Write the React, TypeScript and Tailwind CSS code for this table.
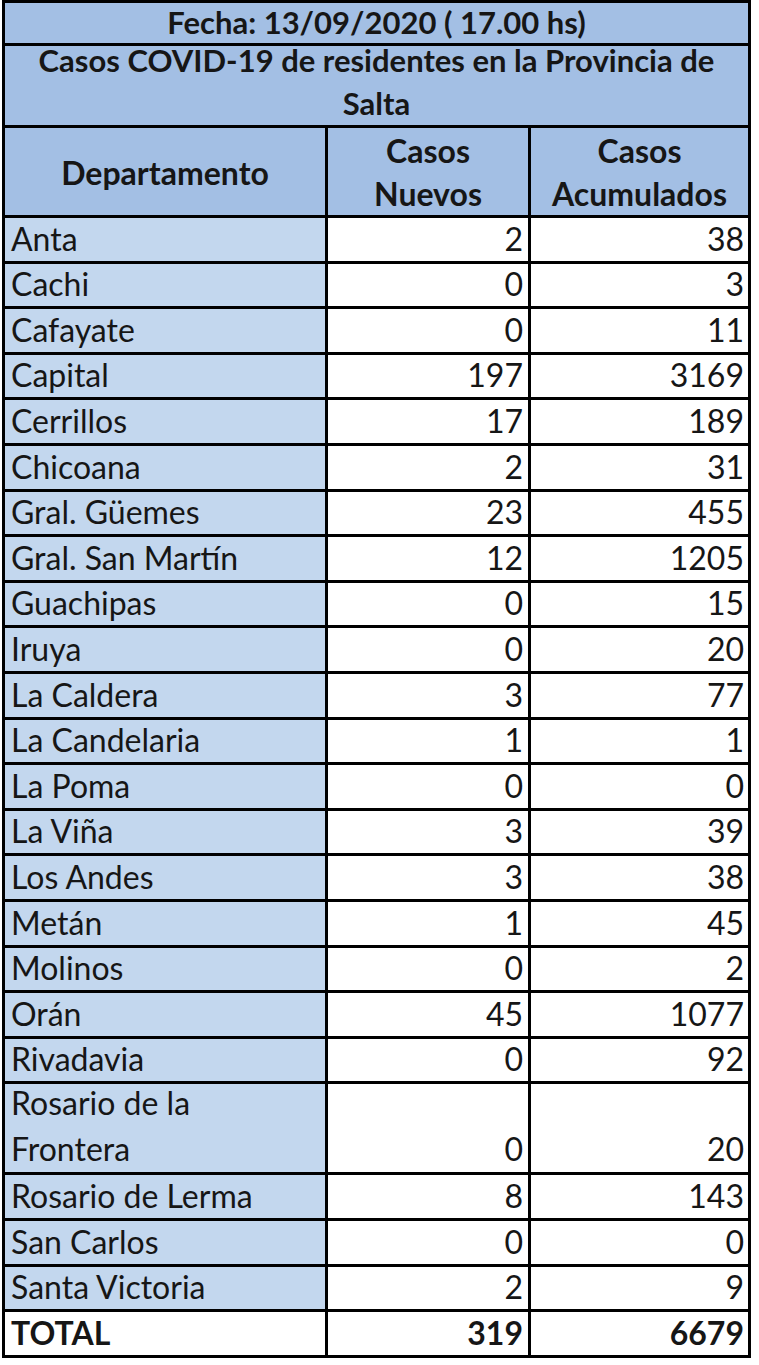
const rows: [string, number, number][] = [
  ["Anta", 2, 38],
  ["Cachi", 0, 3],
  ["Cafayate", 0, 11],
  ["Capital", 197, 3169],
  ["Cerrillos", 17, 189],
  ["Chicoana", 2, 31],
  ["Gral. Güemes", 23, 455],
  ["Gral. San Martín", 12, 1205],
  ["Guachipas", 0, 15],
  ["Iruya", 0, 20],
  ["La Caldera", 3, 77],
  ["La Candelaria", 1, 1],
  ["La Poma", 0, 0],
  ["La Viña", 3, 39],
  ["Los Andes", 3, 38],
  ["Metán", 1, 45],
  ["Molinos", 0, 2],
  ["Orán", 45, 1077],
  ["Rivadavia", 0, 92],
];

const rowsAfter: [string, number, number][] = [
  ["Rosario de Lerma", 8, 143],
  ["San Carlos", 0, 0],
  ["Santa Victoria", 2, 9],
];

function DataRow({ name, nuevos, acum }: { name: string; nuevos: number; acum: number }) {
  return (
    <>
      <div className="flex h-[42.6px] items-end bg-[#c3d7ee] pb-[1px] pl-[6px] leading-[42px]">{name}</div>
      <div className="flex h-[42.6px] items-end justify-end bg-white pb-[1px] pr-[5px] leading-[42px]">{nuevos}</div>
      <div className="flex h-[42.6px] items-end justify-end bg-white pb-[1px] pr-[4px] leading-[42px]">{acum}</div>
    </>
  );
}

export default function App() {
  return (
    <div className="min-h-screen bg-white pl-[2px] font-['Lato',sans-serif] text-[32px] text-[#161616]">
      <div className="grid w-[749px] grid-cols-[320px_200px_217px] gap-[3px] border-[3px] border-black bg-black">
        {/* encabezado */}
        <div className="col-span-3 flex h-[40px] items-end justify-center bg-[#a3bfe4] text-[31px] font-bold leading-[42px]">
          Fecha: 13/09/2020 ( 17.00 hs)
        </div>
        <div className="col-span-3 flex h-[79px] items-end justify-center bg-[#a3bfe4] text-center text-[31px] font-bold leading-[43px]">
          <span>
            Casos COVID-19 de residentes en la Provincia de
            <br />
            Salta
          </span>
        </div>
        <div className="flex h-[87px] items-center justify-center bg-[#a3bfe4] pt-[3px] font-bold">
          Departamento
        </div>
        <div className="flex h-[87px] items-end justify-center bg-[#a3bfe4] text-center font-bold leading-[43px]">
          <span>
            Casos
            <br />
            Nuevos
          </span>
        </div>
        <div className="flex h-[87px] items-end justify-center bg-[#a3bfe4] text-center font-bold leading-[43px]">
          <span>
            Casos
            <br />
            Acumulados
          </span>
        </div>

        {rows.map((r) => (
          <DataRow key={r[0]} name={r[0]} nuevos={r[1]} acum={r[2]} />
        ))}

        <div className="flex h-[88.2px] items-end bg-[#c3d7ee] pl-[6px] leading-[46px]">
          <span>
            Rosario de la
            <br />
            Frontera
          </span>
        </div>
        <div className="flex h-[88.2px] items-end justify-end bg-white pr-[5px] leading-[46px]">0</div>
        <div className="flex h-[88.2px] items-end justify-end bg-white pr-[4px] leading-[46px]">20</div>

        {rowsAfter.map((r) => (
          <DataRow key={r[0]} name={r[0]} nuevos={r[1]} acum={r[2]} />
        ))}

        <div className="flex h-[42.6px] items-end bg-white pb-[1px] pl-[6px] font-bold leading-[42px]">TOTAL</div>
        <div className="flex h-[42.6px] items-end justify-end bg-white pb-[1px] pr-[5px] font-bold leading-[42px]">319</div>
        <div className="flex h-[42.6px] items-end justify-end bg-white pb-[1px] pr-[4px] font-bold leading-[42px]">6679</div>
      </div>
    </div>
  );
}
